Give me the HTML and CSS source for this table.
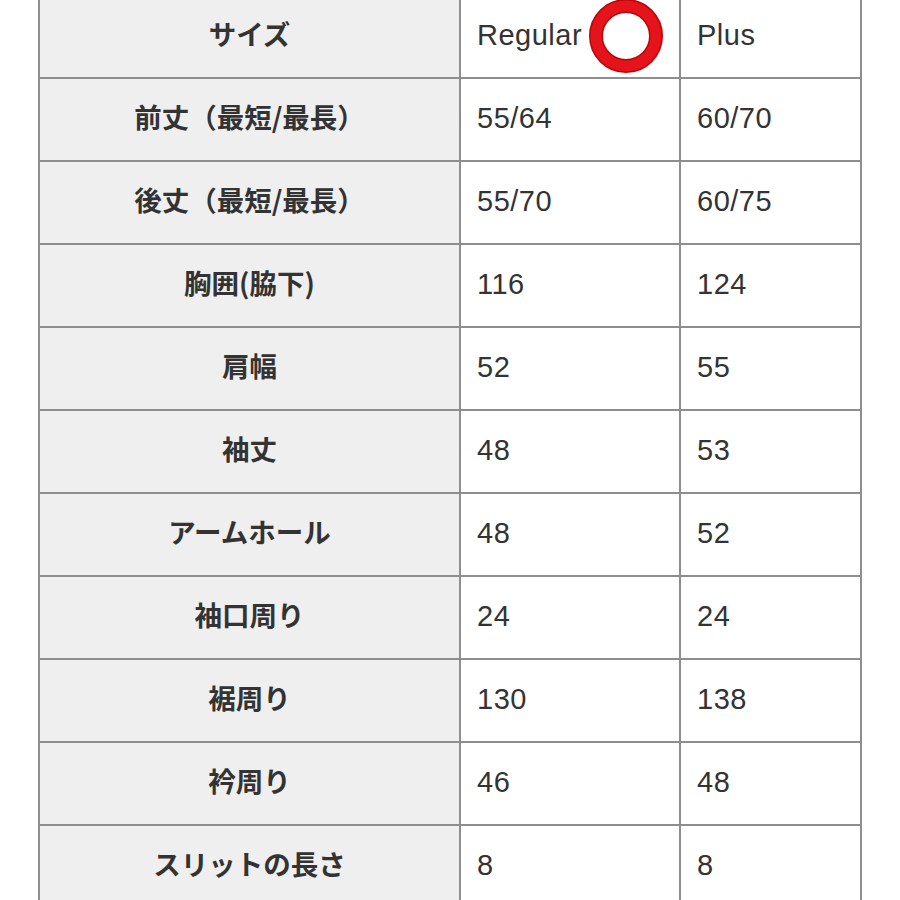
FILE: index.html
```html
<!DOCTYPE html>
<html lang="ja">
<head>
<meta charset="utf-8">
<title>サイズ表</title>
<link rel="stylesheet" href="styles.css">
</head>
<body>
<div class="sheet">
  <div class="grid">
    <div class="cell head">サイズ</div>
    <div class="cell val">Regular<svg class="mark" viewBox="0 0 74 74" width="74" height="74"><circle cx="37" cy="37" r="30" fill="none" stroke="#b8060c" stroke-width="14"/><circle cx="37" cy="37" r="30" fill="none" stroke="#e5141b" stroke-width="11"/></svg></div>
    <div class="cell val">Plus</div>

    <div class="cell head">前丈（最短/最長）</div>
    <div class="cell val">55/64</div>
    <div class="cell val">60/70</div>

    <div class="cell head">後丈（最短/最長）</div>
    <div class="cell val">55/70</div>
    <div class="cell val">60/75</div>

    <div class="cell head">胸囲(脇下)</div>
    <div class="cell val">116</div>
    <div class="cell val">124</div>

    <div class="cell head">肩幅</div>
    <div class="cell val">52</div>
    <div class="cell val">55</div>

    <div class="cell head">袖丈</div>
    <div class="cell val">48</div>
    <div class="cell val">53</div>

    <div class="cell head">アームホール</div>
    <div class="cell val">48</div>
    <div class="cell val">52</div>

    <div class="cell head">袖口周り</div>
    <div class="cell val">24</div>
    <div class="cell val">24</div>

    <div class="cell head">裾周り</div>
    <div class="cell val">130</div>
    <div class="cell val">138</div>

    <div class="cell head">衿周り</div>
    <div class="cell val">46</div>
    <div class="cell val">48</div>

    <div class="cell head">スリットの長さ</div>
    <div class="cell val">8</div>
    <div class="cell val">8</div>
  </div>
</div>
</body>
</html>
```

FILE: styles.css
```css
html, body {
  margin: 0;
  padding: 0;
  background: #ffffff;
  overflow: hidden;
}

.sheet {
  padding-left: 38px;
  margin-top: -6px;
}

.grid {
  display: grid;
  grid-template-columns: 419px 218px 179px;
  grid-auto-rows: 81px;
  gap: 2px;
  padding: 2px;
  width: max-content;
  background: #8e8e8e;
}

.cell {
  display: flex;
  align-items: center;
  color: #333333;
  background: #ffffff;
  box-sizing: border-box;
}

.head {
  justify-content: center;
  background: #efefef;
  font-family: "Noto Sans CJK JP", "Noto Sans", sans-serif;
  font-weight: 700;
  font-size: 27.5px;
  line-height: 1;
  padding-bottom: 6px;
}

.val {
  padding-left: 16px;
  padding-bottom: 2px;
  font-family: "Liberation Sans", Arial, sans-serif;
  font-size: 29px;
  letter-spacing: 0.5px;
}

.mark {
  display: block;
  margin-left: 7px;
  flex: none;
}
```
